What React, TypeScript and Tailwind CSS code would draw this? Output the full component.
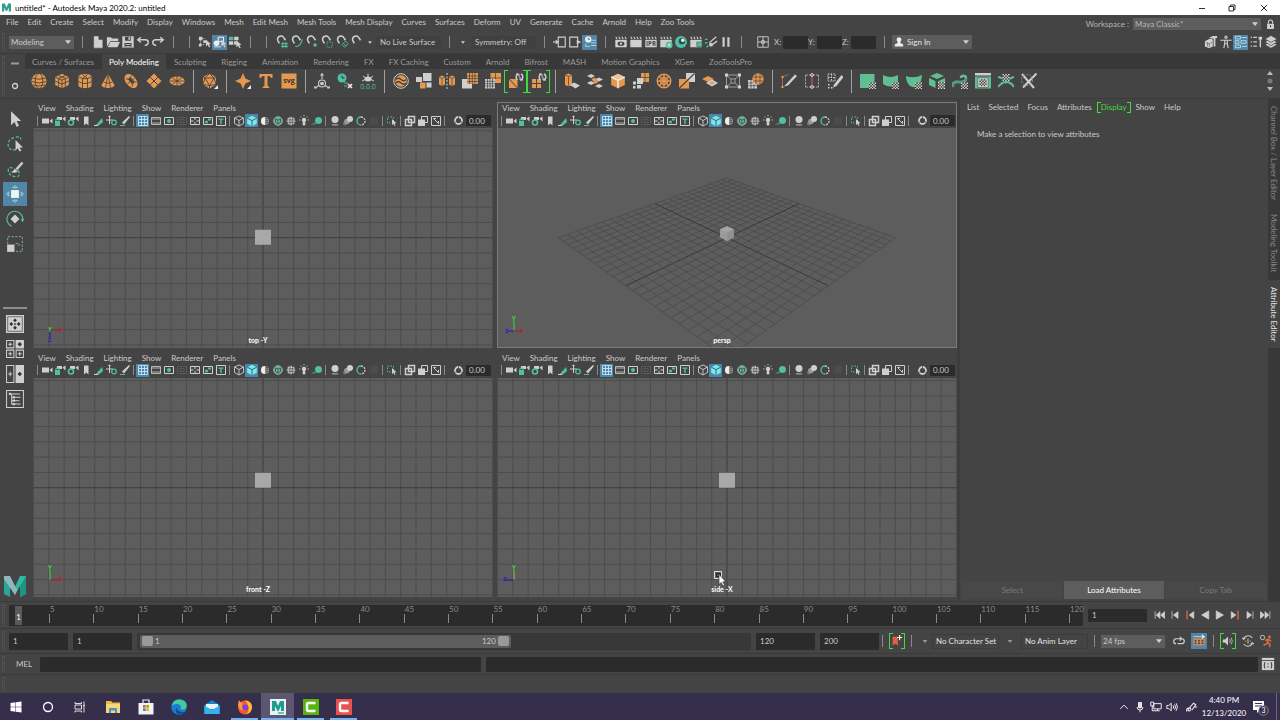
import React, { useState } from "react";
import clsx from "clsx";

const O = "#e59850";
const T = "#4fc0a5";
const G = "#5fbf93";
const W = "#cfcfcf";
const D = "#444444";

const MENUS = [
  "File", "Edit", "Create", "Select", "Modify", "Display", "Windows", "Mesh", "Edit Mesh", "Mesh Tools",
  "Mesh Display", "Curves", "Surfaces", "Deform", "UV", "Generate", "Cache", "Arnold", "Help", "Zoo Tools",
];

const SHELF_TABS = [
  "Curves / Surfaces", "Poly Modeling", "Sculpting", "Rigging", "Animation", "Rendering", "FX", "FX Caching",
  "Custom", "Arnold", "Bifrost", "MASH", "Motion Graphics", "XGen", "ZooToolsPro",
];

const PANEL_MENUS = ["View", "Shading", "Lighting", "Show", "Renderer", "Panels"];

//! checker badge used on the uv tools
const Checker = ({ x, y }: { x: number; y: number }) => (
  <g>
    <rect x={x} y={y} width="7" height="7" fill="#333" />
    {[0, 1, 2, 3, 4, 5, 6, 7, 8, 9, 10, 11, 12].map((i) => {
      const row = Math.floor((i * 2) / 5);
      const col = (i * 2) % 5;
      return <rect key={i} x={x + col * 1.4} y={y + row * 1.4} width="1.4" height="1.4" fill="#e6e6e6" />;
    })}
  </g>
);

const Clapper = ({ children }: { children?: React.ReactNode }) => (
  <g>
    <path d="M2 2l1.500 2.500M5.500 2L7 4.500M9 2l1.500 2.500M12.500 2L14 4.500" stroke={W} strokeWidth="1.300" />
    <rect x="1.500" y="5.500" width="13" height="8.500" fill={W} />
    {children}
  </g>
);

const Magnet = () => (
  <path d="M5 9.500L3.500 7a3.800 3.800 0 0 1 6.500-4l2 3" fill="none" stroke={W} strokeWidth="1.800" />
);

const Arrow = ({ x, y }: { x: number; y: number }) => (
  <path transform={`translate(${x} ${y})`} d="M0 0v8l2-1.800 1.500 3 1.500-.7-1.500-3h2.500z" fill={W} />
);

const iso = "M8 .8l6.800 3.200v8L8 15.200 1.200 12V4z";

//! 16 x 16 drawings for the shelf, status line and tool box
const icons: Record<string, React.ReactNode> = {
  sphere: (
    <g stroke={D} strokeWidth=".9" fill="none">
      <circle cx="8" cy="8" r="7.600" fill={O} stroke="none" />
      <ellipse cx="8" cy="8" rx="3.800" ry="7.600" /><path d="M1 5q7 2.500 14 0M.5 8.500q7.500 3 15 0M2 12q6 2 12 0" />
    </g>
  ),
  cube: (
    <g stroke={D} strokeWidth=".9" fill="none">
      <path d={iso} fill={O} stroke="none" />
      <path d="M1.200 4L8 7.200 14.800 4M8 7.200v8M4.500 2.500l6.800 3v8M11.500 2.500l-6.800 3v8M1.200 8L8 11.200 14.800 8" />
    </g>
  ),
  cylinder: (
    <g stroke={D} strokeWidth=".9" fill="none">
      <path d="M1.500 3.500C1.500 0 14.500 0 14.500 3.500v9c0 3.500-13 3.500-13 0z" fill={O} stroke="none" />
      <path d="M1.500 3.800q6.500 4 13 0M1.500 8.500q6.500 4 13 0M5.500 5.500v9.500M10.500 5.500v9.500M5.500 1.500l5 4M10.500 1.500l-5 4" />
    </g>
  ),
  cone: (
    <g stroke={D} strokeWidth=".8" fill="none">
      <path d="M8 .8L14.500 12c0 4-13 4-13 0z" fill={O} stroke="none" />
      <path d="M8 1L5.500 15M8 1l2.500 14M3.500 9q4.500 2.500 9 0" />
    </g>
  ),
  torus: (
    <g transform="rotate(50 8 8)" stroke={D} strokeWidth=".8">
      <ellipse cx="8" cy="8" rx="8" ry="5.200" fill={O} stroke="none" />
      <ellipse cx="8" cy="7.500" rx="3.400" ry="1.500" fill={D} />
      <path d="M4 4.500l1.500 2M12 4.500l-1.500 2M8 3v3M8 9v4M3 10.500l2.500-2M13 10.500l-2.500-2" />
    </g>
  ),
  plane: (
    <g stroke={D} strokeWidth="1">
      <path d="M8 .5L15.500 8 8 15.500.5 8z" fill={O} stroke="none" /><path d="M4.200 4.200l7.600 7.600M11.800 4.200l-7.600 7.600" />
    </g>
  ),
  disc: (
    <g stroke={D} strokeWidth=".8">
      <ellipse cx="8" cy="8" rx="7.600" ry="4.600" fill={O} stroke="none" /><path d="M3 4.500l10 7M13 4.500l-10 7M8 3v10M.5 8h15" />
    </g>
  ),
  platonic: (
    <g stroke={D} strokeWidth=".9" fill="none">
      <path d="M7.500.5l6.500 3.500v7.500L7.500 15.500 1 11.500V4z" fill={O} stroke="none" />
      <path d="M7.500 12.500L3 5h9zM1 4l2 1M14 4l-2 1M7.500 12.500v3M7.500.5L3 5 1 11.500l6.500 1 6.500-1L12 5z" />
      <path d="M16 12v4h-4z" fill="#eee" stroke="none" />
    </g>
  ),
  star: (
    <g>
      <path d="M8 0l2.400 5.600L16 8l-5.600 2.400L8 16l-2.400-5.600L0 8l5.600-2.400z" fill={O} />
      <path d="M16 12v4h-4z" fill="#eee" />
    </g>
  ),
  type: <path d="M1.500 1h13v4h-1.300q-.5-2-3-2H9.500v9.500q0 1 1.800 1.200V15H4.700v-1.300q1.800-.2 1.800-1.200V3h-.7q-2.500 0-3 2H1.500z" fill={O} />,
  svg: (
    <g>
      <rect x=".5" y=".5" width="15" height="15" fill={O} />
      <text x="8" y="9.500" textAnchor="middle" fontSize="7" fontWeight="bold" fill="#333" fontFamily="Open Sans">svg</text>
    </g>
  ),
  pivot: (
    <g stroke={W} strokeWidth="1.100" fill="none">
      <circle cx="8" cy="10.500" r="3.500" /><circle cx="8" cy="10.500" r="1.300" fill={W} /><path d="M8 1v5M5 12.500L1 15M11 12.500l4 2.500M6.500 2.500L8 .7l1.500 1.800M.8 13v2h2M15.200 13v2h-2" />
    </g>
  ),
  history: (
    <g fill="none">
      <circle cx="5" cy="5" r="4.500" fill={T} /><path d="M5 2.500V5h2.500" stroke="#333" strokeWidth="1" />
      <path d="M7 10h4M7 13h3" stroke={T} strokeWidth="1.200" /><path d="M11 11l4 4M15 11l-4 4" stroke="#eee" strokeWidth="1.600" />
    </g>
  ),
  zero: (
    <g>
      <path d="M8 .5v4M5.500 5h5M3 3l2.500 2M13 3l-2.500 2M2 8l3-1.500M14 8l-3-1.500" stroke={W} strokeWidth="1" /><ellipse cx="8" cy="6" rx="3.500" ry="2.500" fill={W} />
      <text x="8" y="15.500" textAnchor="middle" fontSize="7" fill={T} fontFamily="Open Sans">0,0,0</text>
    </g>
  ),
  combine: (
    <g fill="none">
      <circle cx="8" cy="8" r="7.300" stroke={W} strokeWidth="1" /><circle cx="8" cy="8" r="5.800" fill={O} />
      <path d="M2.500 6.500Q5.500 4 8 6.500t5.500 0M2.500 10q3-2.500 5.500 0t5.500 0" stroke={D} strokeWidth="1.200" />
    </g>
  ),
  separate: (
    <g>
      <rect x="7" y="0" width="8.500" height="8" fill={W} /><rect x="0" y="4" width="6" height="5" fill={W} />
      <rect x="4" y="9.500" width="5.500" height="6" fill={O} /><rect x="10.500" y="9.500" width="5" height="5" fill={W} />
    </g>
  ),
  mirror: (
    <g>
      <path d="M0 4l3-1.500L6 4v7.500L3 13 0 11.500zM10 4l3-1.500L16 4v7.500L13 13l-3-1.500z" fill={O} />
      <path d="M8 0v16" stroke={W} strokeDasharray="2 1.500" /><path d="M0 4l3 1.500L6 4M3 5.500V13M10 4l3 1.500L16 4M13 5.500V13" stroke={D} fill="none" strokeWidth=".7" />
    </g>
  ),
  smooth: (
    <g>
      <rect x="0" y="6" width="10" height="9.500" fill={W} /><rect x="5" y="0" width="11" height="11" fill={O} />
      <path d="M7.500 0v11M10.300 0v11M13 0v11M5 3h11M5 5.500h11M5 8.500h11" stroke={D} strokeWidth=".7" />
    </g>
  ),
  reduce: (
    <g>
      <rect x="5.500" y="0" width="10.500" height="10" fill={O} /><rect x="0" y="6" width="10" height="9.500" fill={W} />
      <path d="M2.500 6v9.500M5 6v9.500M7.500 6v9.500M0 8.300h10M0 10.700h10M0 13h10M10.500 0v6M5.500 5h10.500" stroke={D} strokeWidth=".7" />
    </g>
  ),
  retopo: (
    <g fill="none">
      <rect x="1" y="6" width="8.500" height="9" fill={O} /><path d="M1 6l8.500 9" stroke={D} />
      <path d="M9.500 6.500a3.200 3.200 0 0 1 .5-5.500M13 1a3.200 3.200 0 0 1-.5 6" stroke={W} strokeWidth="1.500" /><path d="M8 1h3v3M15 7h-3V4" stroke={W} />
    </g>
  ),
  remesh: (
    <g fill="none">
      <rect x="1" y="6" width="9" height="9" fill={O} /><path d="M5.500 6v9M1 10.500h9" stroke={D} />
      <path d="M9.500 6.500a3.200 3.200 0 0 1 .5-5.500M13 1a3.200 3.200 0 0 1-.5 6" stroke={W} strokeWidth="1.500" /><path d="M8 1h3v3M15 7h-3V4" stroke={W} />
    </g>
  ),
  extrude: (
    <g>
      <path d="M1 2L4.500 .5 8 2v10l-3.500 1.500L1 12z" fill={O} /><path d="M6 12l4-2.500 6 3-4.500 3z" fill={W} />
      <path d="M1 2l3.500 1.500L8 2M4.500 3.500v10" stroke={D} fill="none" strokeWidth=".7" />
    </g>
  ),
  bridge: (
    <g fill={W}>
      <path d="M0 3l4-2 4 2-4 2zM0 10l4-2 4 2-4 2zM8 6.500l4-2 4 2-4 2zM8 13l4-2 4 2-4 2z" /><path d="M4.500 6l3.500-1.500L11.500 9 8 11z" fill={O} />
    </g>
  ),
  bevel: (
    <g>
      <path d={iso} fill={O} /><path d="M8 .8l6.800 3.200L8 7.500 1.200 4z" fill="#f0c49a" />
      <path d="M1.200 4L8 7.500 14.800 4M8 7.500v7.700" stroke="#eee" fill="none" strokeWidth="1.400" />
    </g>
  ),
  merge: (
    <g>
      <rect x="8" y="0" width="8" height="9" fill={O} /><rect x="4" y="5" width="6" height="6" fill={W} />
      <path d="M0 8.500h3v3H0zM4 12h4v3.500H4zM0 13h2.500v2.500H0z" fill={W} /><path d="M8 4.500h8M12 0v9" stroke={D} strokeWidth=".7" />
    </g>
  ),
  collapse: (
    <g fill="none" stroke={O} strokeWidth="1.400">
      <circle cx="8" cy="8" r="6.800" /><circle cx="8" cy="8" r="3.600" /><path d="M8 1v14M1 8h14M3 3l10 10M13 3L3 13" />
    </g>
  ),
  fill: (
    <g>
      <rect x="7" y="0" width="9" height="9" fill={W} /><rect x="0" y="6" width="10" height="9.500" fill={O} />
      <path d="M0 15.500L15.500 .5" stroke={D} strokeWidth="1.200" />
    </g>
  ),
  quad: (
    <g>
      <path d="M0 6l6-3 6 3-6 3z" fill={O} /><path d="M4 10l6-3.500L16 10l-6 3.500z" fill={W} /><path d="M7 10l3-1.500L13 10l-3 1.500z" fill={O} />
    </g>
  ),
  lattice: (
    <g stroke={W} fill="none" strokeWidth="1">
      <path d="M1.500 2h13v12h-13zM1.500 2L6 6M14.500 2L10 6M1.500 14L6 10M14.500 14L10 10M6 6h4v4H6z" stroke="#9b9b9b" />
      <path d="M0 .5h3v3H0zM13 .5h3v3h-3zM0 12.500h3v3H0zM13 12.500h3v3h-3z" fill={W} stroke="none" />
    </g>
  ),
  spherify: (
    <g>
      <rect x="0" y="7" width="9" height="8.500" fill={W} /><circle cx="10" cy="6" r="5.700" fill={O} />
      <path d="M3 7v8.500M6 11v4.500M0 10h5M0 12.700h9M5 4h10M5 8h10M8 1v10M12 1v10" stroke={D} strokeWidth=".7" />
    </g>
  ),
  multicut: (
    <g fill="none">
      <path d="M1.500 14V4l6-2.500" stroke="#9d6a5a" /><path d="M3 13.500L14 1.500l2 1.500L7 12.500z" fill={W} />
      <circle cx="1.500" cy="4" r="1.200" fill={O} /><circle cx="1.500" cy="14" r="1.200" fill={O} />
    </g>
  ),
  target: (
    <g fill="none" strokeWidth="1">
      <path d="M1.500 2v12M14.500 2v12M1.500 2h13M1.500 14h13" stroke="#a5a5a5" strokeDasharray="2.500 1" /><path d="M8 2v12" stroke="#d2635a" />
      <circle cx="8" cy="2" r="1.400" stroke={W} /><circle cx="8" cy="14" r="1.400" stroke={W} />
    </g>
  ),
  quaddraw: (
    <g>
      <path d="M1 1h7v7H1zM4.500 1v7M1 4.500h7" stroke={W} strokeDasharray="1.500 1" fill="none" /><path d="M7 11.500L14.500 2l2 2L9.500 13l-3.500 1.500z" fill={W} /><path d="M1 11h1.500v1.500H1zM1 14h1.500v1.500H1zM4 14h1.500v1.500H4z" fill={W} />
    </g>
  ),
  uvPlanar: <g><rect x="0" y="1" width="14.500" height="14" fill={G} /><Checker x={9} y={9.500} /></g>,
  uvCyl: <g><path d="M0 2q7.500 4 15 0v9q-7.500 5-15 0z" fill={G} /><Checker x={9} y={9.500} /></g>,
  uvSph: <g><path d="M0 3q8 3 16-1 0 7-5 12-3 1-7-1Q0 9 0 3z" fill={G} /><Checker x={9} y={9.500} /></g>,
  uvAuto: <g><path d="M8 0l7 3-7 3-7-3zM0 5l6.500 3v7L0 12zM9.500 8L16 5v4l-6.500 3z" fill={G} /><Checker x={9} y={9} /></g>,
  uvContour: <g fill="none"><path d="M1 14q-1-6 6-5 7 1 7-4c0-3-5-3-5 0" stroke={G} strokeWidth="2.600" /><path d="M1 14q-1-6 6-5 7 1 7-4" stroke={D} strokeWidth=".6" /><Checker x={9} y={9.500} /></g>,
  uvEditor: <g><rect x="0" y="0" width="16" height="2.500" fill={W} /><rect x="0" y="3.500" width="16" height="12" fill={G} /><rect x="3" y="5" width="10" height="9.500" fill="#e9e9e9" stroke={D} strokeWidth=".6" /><Checker x={4.500} y={6.200} /></g>,
  uvUnfold: <g><path d="M0 4q6 1 8 5 3-4 8-5M0 14q4-5 8-5 5 0 8 5" stroke={G} strokeWidth="2" fill="none" /><Checker x={4.500} y={1} /></g>,
  uvCut: <g fill="none"><path d="M1 1l12 14M15.500.5L2 14.500" stroke={W} strokeWidth="2" /><circle cx="6" cy="7" r="5.500" stroke="#8f8f8f" strokeDasharray="2 1.500" /></g>,
  new: <path d="M3 1h6l4.500 4v10H3zM9 1v4h4.500" fill={W} stroke={D} strokeWidth=".6" />,
  open: <path d="M1 13.500V2.500h4.500L7 4h7v3H5zM5 8h11l-3 6H2z" fill={W} />,
  save: <g><path d="M1.500 1.500h13v13h-13z" fill={W} /><path d="M4.500 2h7v4.500h-7zM4 9h8v5H4z" fill={D} /><path d="M8.500 2.500h2v3h-2zM5 10.500h6v1H5zM5 12.500h6v1H5z" fill={W} /></g>,
  undo: <path d="M5.500 2.500L2 5.500l3.500 3M2.500 5.500h8q3.500 0 3.500 3t-4 3.500" fill="none" stroke={W} strokeWidth="1.600" />,
  redo: <path d="M10.500 2.500L14 5.500l-3.500 3M13.500 5.500h-8Q2 5.500 2 8.500T6 12" fill="none" stroke={W} strokeWidth="1.600" />,
  selHier: <g><path d="M1 2h4v4H1zM1 10h3v3H1zM6 6h3v3H6z" fill={W} /><path d="M3 6v5h4M5 4h3" stroke={W} fill="none" strokeDasharray="1.500 1" /><Arrow x={9} y={5} /></g>,
  selObj: <g><circle cx="4" cy="9.500" r="3.200" fill="#eee" /><path d="M6 2.500h6v5H6z" fill="none" stroke="#eee" strokeWidth="1.200" /><path d="M1 13.500h8" stroke="#eee" /><Arrow x={9.500} y={5} /></g>,
  selComp: <g><path d="M1 2h5v4H1z" fill={T} /><path d="M7 2h5v4H7zM1 7h5v4H1zM7 7h3v4H7z" fill={W} /><Arrow x={9.500} y={6} /></g>,
  snapGrid: <g><Magnet /><path d="M9 8v7M12.500 8v7M7 10h8M7 13h8" stroke={T} strokeWidth="1.200" /></g>,
  snapCurve: <g><Magnet /><path d="M6 13q6 1 8-8" stroke={T} strokeWidth="1.200" fill="none" /></g>,
  snapPoint: <g><Magnet /><circle cx="11.500" cy="11.500" r="2" fill={T} /></g>,
  snapProj: <g><Magnet /><path d="M8 8h6v6H8z" stroke={T} strokeDasharray="1.500 1.500" fill="none" /></g>,
  snapPlane: <g><Magnet /><path d="M8 11l4-4 3 3-4 4zM9.500 9.500l3 3" stroke={T} fill="none" /></g>,
  snapLive: <Magnet />,
  inConn: <g fill="none" stroke={W} strokeWidth="1.300"><path d="M6 2.500h8v11H6z" /><path d="M0 8h3" /><path d="M3 5.500L7 8l-4 2.500z" fill={W} stroke="none" /></g>,
  outConn: <g fill="none" stroke={W} strokeWidth="1.300"><path d="M2 2.500h9v11H2z" /><path d="M10 5.500L15 8l-5 2.500z" fill={W} stroke="none" /></g>,
  construct: <g><circle cx="6" cy="5" r="3.600" fill="#eee" /><path d="M6 3v2h2" stroke="#3d6e8f" fill="none" /><path d="M9 6h6M9 9h6M9 12h6M3 10v3h5" stroke="#b9dcee" fill="none" /></g>,
  render: <Clapper><ellipse cx="8" cy="10" rx="4" ry="2.500" fill="#444" /><circle cx="8" cy="10" r="1.300" fill={W} /></Clapper>,
  renderSeq: <Clapper />,
  ipr: <Clapper><text x="8" y="12.500" textAnchor="middle" fontSize="7" fontWeight="bold" fill="#444" fontFamily="Open Sans">IPR</text></Clapper>,
  renderSet: <Clapper><circle cx="11.500" cy="11.500" r="3" fill="none" stroke={T} strokeWidth="2" /></Clapper>,
  hyper: <g><circle cx="8" cy="8" r="6.800" fill={T} /><circle cx="9" cy="7" r="3.600" fill="#2d4f4a" /><circle cx="10" cy="6" r="2" fill="#e7f7f3" /></g>,
  renderView: <Clapper><rect x="9" y="8" width="6" height="5" fill={T} stroke={D} strokeWidth=".6" /></Clapper>,
  lightEd: <g><path d="M6 9l8-7M8 12l7-5" stroke={W} strokeWidth="1.500" /><circle cx="8" cy="11" r="2.200" fill={W} /><path d="M1 5h3M1 9h3M3 14l2-2" stroke={T} strokeWidth="1.300" /></g>,
  pause: <path d="M4 2.500h2.500v11H4zM9.500 2.500H12v11H9.500z" fill={W} />,
  gridBox: <g fill="none" stroke={W}><path d="M2 2h12v12H2zM8 2v12M2 8h12" /><circle cx="8" cy="8" r="2" /></g>,
  mkit: <g fill={W}><path d="M1 7l6-3 3 1v8l-4 2-5-2z" /><path d="M6 3l4-2h5v2l-2 1v9h-2V4H9z" /><path d="M2 8.500l4 1.500v4M4 9v4M6 10l3-1.500" stroke={D} fill="none" strokeWidth=".6" /></g>,
  human: <g stroke={W} fill="none" strokeWidth="1.300"><circle cx="8" cy="2.500" r="1.300" /><path d="M1.500 6h13M6.500 6v4l-1 5M9.500 6v4l1 5M6.500 10h3" /></g>,
  attr: <g stroke="#bfe3f5" fill="none"><path d="M1.500 1.500h6v3h-6zM1.500 6.500h4v3h-4zM1.500 11.500h6v3h-6zM9 3h6M9 13h6M8 6.500h6v3H8z" /></g>,
  tools: <g><path d="M2 2h1.500v1.500H2zM5 2h4v1.500H5zM2 7h1.500v1.500H2zM5 7h4v1.500H5zM2 12h1.500v1.500H2zM5 12h4v1.500H5z" fill={W} /><path d="M11 2h4v3h-1.200v9h-1.600V5H11z" fill={W} /></g>,
  layers: <g fill={W} stroke={D} strokeWidth=".8"><path d="M8 7l7 4-7 4-7-4z" /><path d="M8 4l7 4-7 4-7-4z" /><path d="M8 .5l7 4-7 4-7-4z" /></g>,
  lock: <g><path d="M5 7V4.500a3 3 0 0 1 6 0V7" stroke={W} strokeWidth="1.600" fill="none" /><rect x="3" y="7" width="10" height="7.500" fill={W} /><path d="M8 9v3" stroke={D} strokeWidth="1.500" /></g>,
  user: <path d="M8 1.500a3.200 3.200 0 0 1 2 5.700V9.500l3.500 1.500V14h-11v-3L6 9.500V7.200a3.200 3.200 0 0 1 2-5.700z" fill="#eee" />,
  select: <path d="M4.500 1v12.500l3-2.800 2 4.300 2-1-2-4.200h4z" fill={W} />,
  lasso: <g><path d="M9 13Q3 14 2 10q-1-6 6-8 6-1 5 2" fill="none" stroke={T} strokeWidth="1.100" strokeDasharray="2.500 1.500" /><path d="M8.500 4.500v9l2-1.800 1.600 3 1.500-.8-1.500-2.900h3z" fill={W} /></g>,
  paint: <g><path d="M11 9q2 6-2 6-7-1-7-6 0-3 4-2" fill="none" stroke={T} strokeWidth="1.100" strokeDasharray="2.500 1.500" /><path d="M8.500 7.500l5.500-6 1.500 1.300L10 9z" fill={W} /><path d="M7.500 7.500l3 2.500Q8 12.500 3.500 10.500 7 10.500 7.500 7.500z" fill={W} /></g>,
  move: <g><rect x="4.500" y="4.500" width="7" height="7" fill="#eef4f8" /><path d="M8 .5l2 2H6zM8 15.500l2-2H6zM.5 8l2-2v4zM15.500 8l-2-2v4z" fill="none" stroke="#9fdfd5" strokeWidth=".8" /></g>,
  rotate: <g><path d="M8 4L12 8l-4 4-4-4z" fill={W} /><path d="M5 14.500A7 7 0 1 1 14.800 9" fill="none" stroke={T} /><path d="M13.200 8h3l-1.500 3z" fill={T} /></g>,
  scale: <g><rect x="1" y="8.500" width="6.500" height="6.500" fill={W} /><path d="M1.500 8V1.500h13v13H9M8.500 7.500h3v3" fill="none" stroke="#8fb3ab" strokeWidth=".8" strokeDasharray="2 1.300" /></g>,
  layout1: <g><rect x="0" y="0" width="16" height="16" fill={W} /><path d="M1.500 1.500h13v13h-13z" fill="none" stroke="#555" strokeWidth=".7" /><path d="M8 3l1.700 1.700L8 6.400 6.300 4.700zM8 9.600l1.700 1.700L8 13l-1.700-1.700zM4.700 6.300L6.400 8 4.700 9.700 3 8zM11.300 6.300L13 8l-1.700 1.700L9.600 8zM8 7l1 1-1 1-1-1z" fill="#333" /></g>,
  layout4: <g fill="none" stroke={W} strokeWidth=".9"><path d="M.5.500h6.500v6.500H.5zM.5 9h6.500v6.500H.5zM9 9h6.500v6.500H9zM3.700 2v3.500M2 3.700h3.500M3.700 10.500V14M2 12.200h3.500M12.200 10.500V14M10.500 12.200H14" /><rect x="8.500" y="0" width="7.500" height="7.500" fill={W} stroke="none" /><path d="M12.200 1.700l2 2-2 2-2-2z" fill="#333" stroke="none" /></g>,
  layout2: <g fill="none" stroke={W} strokeWidth=".9"><path d="M.5.500h6.500v15H.5zM3.700 6v4M2 8h3.500" /><rect x="8.500" y="0" width="7.500" height="16" fill={W} stroke="none" /><path d="M12.200 6l2 2-2 2-2-2z" fill="#333" stroke="none" /></g>,
  outliner: <g fill="none" stroke={W} strokeWidth=".9"><path d="M.5.500h15v15H.5zM3.500 3.500h9M5 3.500v9h2M5 6.500h2M5 9.500h2M8 6.500h5M8 9.500h4M8 12.500h5" /><path d="M2.500 2.500h2v2h-2zM6 5.500h2v2H6zM6 8.500h2v2H6zM6 11.500h2v2H6z" fill={W} stroke="none" /></g>,
  key: <g><path d="M3 3h6v10l-3-2-3 2z" fill="#e0603f" /><path d="M11 1v6M8 4h6" stroke="#eee" strokeWidth="1.400" /></g>,
  loop: <path d="M4 11.500q-3 0-3-3t3-3.500h7M9 2.500L11.500 5 9 7.500M12 5q3 .3 3 3.200t-3 3.300H6" fill="none" stroke={W} strokeWidth="1.600" />,
  cached: <g><path d="M1.500 5h13v8h-13z" fill="#c98a5e" /><path d="M3 7h2v1.500H3zM7 7h2v1.500H7zM11 7h2v1.500h-2zM3 10h2v1.500H3zM7 10h2v1.500H7zM11 10h2v1.500h-2z" fill="#333" /><path d="M1.500 3h9M11.500 1l3 2-3 2z" stroke="#eee" fill="#eee" strokeWidth=".8" /></g>,
  speaker: <g><path d="M1 6h3l4-4v12l-4-4H1z" fill={W} /><path d="M10 5.500q2 2.500 0 5M12 3.500q3.500 4.500 0 9" stroke={W} fill="none" /></g>,
  evaluate: <g fill="none" stroke={W} strokeWidth="1.200"><path d="M3 5a6 6 0 0 1 10-.5M13 11a6 6 0 0 1-10 .5M1.500 4.500L3 6l2-1.500M14.500 11.500L13 10l-2 1.500" /><path d="M8 5v6" stroke={O} strokeWidth="1.500" /><path d="M5 8h1M10 8h1" /></g>,
  prefs: <g><circle cx="4" cy="4" r="2.500" fill="none" stroke={W} /><circle cx="12" cy="3.500" r="1.700" fill="#e0703f" /><path d="M11 6L7 7M11 6l-2 5-4 2M9.500 10l3 1.500-.5 3.500M11 6l3 2.500" stroke="#e0703f" strokeWidth="1.600" fill="none" /></g>,
  script: <g><rect x="1" y="1" width="14" height="14" fill={W} /><path d="M1 4h14" stroke={D} /><path d="M4.500 6q-1.500 3.500 0 7M11.500 6q1.500 3.500 0 7M8 7v1.500M8 10.500V12" stroke={D} strokeWidth="1.300" fill="none" /></g>,
};

//! 12 x 12 drawings for the panel toolbars
const small: Record<string, React.ReactNode> = {
  camera: <path d="M1 3.500h7v5H1zM8.500 6L11.500 3.500v5z" fill={W} />,
  camLock: <g><path d="M3 2h5v3H3zM8.500 3.500L11.500 1.500v5z" fill={W} /><path d="M1 6h5v5H1z" fill={T} /><path d="M2 6V4h3v2" stroke={T} fill="none" /></g>,
  camAttr: <g><path d="M3 2h5v3H3zM8.500 3.500L11.500 1.500v5z" fill={W} /><circle cx="4" cy="7.500" r="2.500" fill="none" stroke={T} strokeWidth="1.600" /></g>,
  bookmark: <path d="M4 1.500h4.500v9L6.200 8.500 4 10.500z" fill={W} />,
  imagePlane: <g><path d="M3 10L9 3l1 4-4 3.500z" fill={T} /><path d="M1 10.500h4" stroke={W} /></g>,
  panZoom: <g fill="none"><path d="M3.500 1v8M0 5h7M2.500 2l1-1.200 1 1.200" stroke={W} /><circle cx="8" cy="7.500" r="2.300" stroke={T} strokeWidth="1.300" /></g>,
  pencil: <g><path d="M3 7.500L10 1l1 1L5 9.500z" fill={W} /><path d="M1 10.500h5" stroke={T} /></g>,
  grid: <path d="M1.500 1.500h9v9h-9zM1.500 4.500h9M1.500 7.500h9M4.500 1.500v9M7.500 1.500v9" stroke="#d9ecf7" strokeWidth=".8" fill="none" />,
  film: <path d="M1.500 2.500h9v7h-9zM1.500 4h9M1.500 8h9" stroke={W} strokeWidth=".8" fill="none" />,
  resGate: <g><path d="M1.500 2.500h9v7h-9z" stroke={W} fill="none" /><circle cx="6" cy="6" r="2" fill={T} /></g>,
  gateMask: <path d="M1.500 2.500h9v7h-9zM4 4.500h4v3H4z" stroke="#575757" fill="none" />,
  fieldChart: <path d="M1.500 2.500h9v7h-9zM6 2.500v2.500M6 7v2.500M1.500 6h3M7.500 6h3" stroke={W} fill="none" />,
  safeAction: <g><path d="M1.500 2.500h9v7h-9z" stroke={W} fill="none" /><circle cx="4.500" cy="7" r="1.600" fill={T} /><path d="M6 3.500h3v2H6z" fill={T} /></g>,
  safeTitle: <g><path d="M1.500 1.500h9v9h-9z" stroke={W} fill="none" /><path d="M3.500 3.500h5v1.300H6.700V9H5.300V4.800H3.500z" fill={T} /></g>,
  wire: <path d="M6 1l4.500 2v5.500L6 11 1.500 8.500V3zM1.500 3L6 5.500 10.500 3M6 5.500V11" stroke={W} strokeWidth=".9" fill="none" />,
  shaded: <g><path d="M6 .8l4.800 2.400v5.600L6 11.200 1.200 8.800V3.200z" fill="#7fe6e6" /><path d="M1.200 3.200L6 5.600l4.800-2.400M6 5.600v5.600" stroke="#2a6f86" fill="none" /></g>,
  defMat: <g><circle cx="6" cy="6" r="4" fill="#888" /><path d="M6 2v8a4 4 0 0 1 0-8z" fill="#eee" /><path d="M8 3v6" stroke="#333" strokeDasharray="1 1" /></g>,
  textured: <g><circle cx="6" cy="6" r="4.300" fill={T} /><path d="M3 3.500L6 5l3-1.500M6 5v4.500M3.500 4v3.500L6 9.300 8.500 7.500V4" stroke="#555" fill="none" /><circle cx="6" cy="6" r="4.300" fill="none" stroke="#9fa8a5" /></g>,
  texture: <g><circle cx="6" cy="6" r="4.300" fill="#bbb" /><path d="M2 5h8M2 7.500h8M5 2v8M7.500 2v8" stroke="#444" strokeDasharray="1.200 1" /></g>,
  lights: <g><circle cx="6" cy="5" r="2.200" fill={W} /><path d="M5 7.500h2V10H5zM6 0v1.500M1 5h1.500M9.500 5H11M2.500 1.500l1 1M9.500 1.500l-1 1" stroke={W} fill={W} strokeWidth=".8" /></g>,
  shadows: <g><circle cx="7.500" cy="5.500" r="3.500" fill={T} /><path d="M0 9l4-1.500L5 9.500H1z" fill={T} opacity=".6" /></g>,
  isolate: <g><circle cx="6" cy="4.500" r="3.500" fill={W} /><ellipse cx="6" cy="9.700" rx="3.500" ry="1" fill="#888" /></g>,
  motion: <g><circle cx="3" cy="8.500" r="2" fill="#777" /><circle cx="5" cy="6.500" r="2.800" fill="#999" /><circle cx="8" cy="4" r="3" fill={W} /></g>,
  aa: <g fill="none" strokeWidth="1.300"><path d="M6 2a4 4 0 0 0 0 8" stroke={T} /><path d="M6 2a4 4 0 0 1 0 8" stroke={W} strokeDasharray="2 1" /></g>,
  blank: <rect x="2" y="2" width="8" height="8" fill="#4b4b4b" />,
  pick: <g><path d="M1.500 2h6v6h-6z" stroke={T} strokeDasharray="1.500 1.500" fill="none" /><path d="M6 4v6l1.500-1.300 1 2.300 1-.5-1-2.300h2z" fill={W} /></g>,
  xray: <g fill="none" stroke={W} strokeWidth="1.500"><path d="M4.500 1.500h6v6h-6zM1.500 4.500h6v6h-6z" /></g>,
  xray2: <g><path d="M4.500 1.500h6v6h-6z" fill="none" stroke={W} /><path d="M1 4.500h7V11H1z" fill={W} /></g>,
  xray3: <path d="M1.500 1.500h9v9h-9zM3.500 3.500l5 5M3.500 3.500h2.500M8.500 8.500V6" fill="none" stroke={W} />,
  exposure: <g fill="none" stroke={W} strokeWidth="2"><circle cx="6" cy="6" r="3.800" /><path d="M6 1v2.500M10.500 8.500l-2-1.200M1.500 8.500l2-1.200" stroke={D} strokeWidth=".8" /></g>,
};

const PANEL_GROUPS = [
  ["camera", "camLock", "camAttr", "bookmark", "imagePlane", "panZoom", "pencil"],
  ["grid", "film", "resGate", "gateMask", "fieldChart", "safeAction", "safeTitle"],
  ["wire", "shaded", "defMat", "textured", "texture", "lights", "shadows"],
  ["isolate", "motion", "aa", "blank"],
  ["pick"],
  ["xray", "xray2", "xray3"],
];

const SHELF_GROUPS = [
  ["sphere", "cube", "cylinder", "cone", "torus", "plane", "disc"],
  ["platonic"],
  ["star", "type", "svg"],
  ["pivot", "history", "zero"],
  ["combine", "separate", "mirror", "smooth", "reduce", "retopo", "remesh"],
  ["extrude", "bridge", "bevel", "merge", "collapse", "fill", "quad", "lattice", "spherify"],
  ["multicut", "target", "quaddraw"],
  ["uvPlanar", "uvCyl", "uvSph", "uvAuto", "uvContour", "uvEditor", "uvUnfold", "uvCut"],
];

const Icon = ({ name, className = "w-3 h-3" }: { name: string; className?: string }) => (
  <svg viewBox="0 0 16 16" className={clsx("shrink-0", className)}>{icons[name]}</svg>
);

const Brackets = () => (
  <>
    <span className="absolute inset-y-0 left-0 w-1 border-y border-l border-[#3fdc3f]" />
    <span className="absolute inset-y-0 right-0 w-1 border-y border-r border-[#3fdc3f]" />
  </>
);

//! every small thing on the status line sits in a 15px slot
const Slot = ({ name, active }: { name: string; active?: boolean }) => (
  <button aria-label={name} className={clsx("flex h-[15px] w-[15px] shrink-0 items-center justify-center", active && "bg-[#5285a6]")}>
    <Icon name={name} className="h-3.5 w-3.5" />
  </button>
);

const Sep = () => (
  <span className="flex w-4 shrink-0 justify-center">
    <span className="h-3 w-px bg-[#8a8a8a]" />
  </span>
);

const Caret = ({ className }: { className?: string }) => (
  <svg viewBox="0 0 8 5" className={clsx("shrink-0", className)}><path d="M0 0h8L4 5z" fill={W} /></svg>
);

const Grip = () => <span className="my-0.5 ml-0.5 w-[3px] shrink-0 self-stretch border-x border-dotted border-[#5a5a5a]" />;

const Drop = ({ label, value, className, icon }: { label: string; value: string; className: string; icon?: string }) => (
  <div className={clsx("relative flex shrink-0 items-center bg-[#5d5d5d]", className)}>
    {icon && <Icon name={icon} className="ml-px h-3 w-3" />}
    <select aria-label={label} className="h-full w-full appearance-none bg-transparent pl-0.5 outline-none">
      <option>{value}</option>
    </select>
    <Caret className="pointer-events-none absolute right-[3px] h-1 w-1.5" />
  </div>
);

const Field = ({ label, value = "", className }: { label: string; value?: string; className: string }) => (
  <input aria-label={label} defaultValue={value} className={clsx("min-w-0 rounded-[1px] bg-[#2b2b2b] outline-none", className)} />
);

const TitleBar = () => (
  <header className="flex h-[15px] shrink-0 items-center bg-white pl-0.5 text-black">
    <svg viewBox="0 0 16 16" className="h-[9px] w-[9px]">
      <path d="M0 1h5l3 7 3-7h5v14h-4V8l-3 6H7L4 8v7H0z" fill="#2d9f8c" />
    </svg>
    <h1 className="ml-1">untitled* - Autodesk Maya 2020.2: untitled</h1>
    <div className="ml-auto flex">
      <button aria-label="Minimize" className="flex w-[31px] items-center justify-center"><svg viewBox="0 0 8 8" className="h-2 w-2"><path d="M1 4.500h6" stroke="#333" /></svg></button>
      <button aria-label="Restore" className="flex w-[30px] items-center justify-center"><svg viewBox="0 0 8 8" className="h-2 w-2"><path d="M1 2.500h4.500V7H1zM2.500 2.500V1H7v4.500H5.500" stroke="#333" fill="none" /></svg></button>
      <button aria-label="Close" className="flex w-[33px] items-center justify-center"><svg viewBox="0 0 8 8" className="h-2 w-2"><path d="M1 1l6 6M7 1L1 7" stroke="#333" /></svg></button>
    </div>
  </header>
);

const MenuBar = () => (
  <nav className="flex h-4 shrink-0 items-start pl-1.5">
    <div className="flex h-[14px] items-center gap-[9px]">
      {MENUS.map((m) => (
        <button key={m} className="whitespace-nowrap">{m}</button>
      ))}
    </div>
    <div className="ml-auto flex items-center pt-[3px] text-[#b5b5b5]">
      <span className="mr-1">Workspace :</span>
      <Drop label="Workspace" value="Maya Classic*" className="h-3 w-[128px]" />
      <Icon name="lock" className="mx-1 h-[11px] w-[11px]" />
    </div>
  </nav>
);

const StatusLine = () => (
  <section className="flex h-[23px] shrink-0 items-center border-b border-[#3a3a3a]">
    <Grip />
    <Drop label="Menu set" value="Modeling" className="ml-1 h-[13px] w-[65px]" />
    <Sep />
    {["new", "open", "save", "undo", "redo"].map((n) => <Slot key={n} name={n} />)}
    <Sep />
    <Sep />
    <Slot name="selHier" />
    <Slot name="selObj" active />
    <Slot name="selComp" />
    <Sep />
    <Sep />
    {["snapGrid", "snapCurve", "snapPoint", "snapProj", "snapPlane", "snapLive"].map((n) => <Slot key={n} name={n} />)}
    <Caret className="mx-1 h-[3px] w-1" />
    <button className="h-[13px] w-[65px] shrink-0 bg-[#404040] pl-1 text-left">No Live Surface</button>
    <Sep />
    <Caret className="mx-1 h-[3px] w-1" />
    <button className="ml-0.5 h-[13px] w-[65px] shrink-0 bg-[#404040] pl-1 text-left">Symmetry: Off</button>
    <Sep />
    <Slot name="inConn" />
    <Slot name="outConn" />
    <Slot name="construct" active />
    <Sep />
    {["render", "renderSeq", "ipr", "renderSet", "hyper", "renderView", "lightEd", "pause"].map((n) => <Slot key={n} name={n} />)}
    <Sep />
    <span className="w-1.5" />
    <Slot name="gridBox" />
    <div className="ml-1 flex items-center">
      {["X:", "Y:", "Z:"].map((a) => (
        <label key={a} className="flex items-center">
          <span className="w-[9px]">{a}</span>
          <input className="h-[13px] w-[25px] rounded-[1px] bg-[#2b2b2b] outline-none" />
        </label>
      ))}
    </div>
    <Sep />
    <Drop label="Account" value="Sign In" icon="user" className="h-[14px] w-[80px] text-[#e4e4e4]" />
    <div className="ml-auto flex items-center pr-0.5">
      <Slot name="mkit" />
      <Slot name="human" />
      <Slot name="attr" active />
      <Slot name="tools" />
      <Slot name="layers" />
    </div>
  </section>
);

const Shelf = () => {
  const [tab, setTab] = useState("Poly Modeling");
  return (
    <section className="flex h-11 shrink-0">
      <Grip />
      <div className="flex w-5 shrink-0 flex-col items-center justify-between py-2">
        <svg viewBox="0 0 8 4" className="h-1 w-2"><path d="M0 .5h8v2H0z" fill="#999" /></svg>
        <svg viewBox="0 0 8 8" className="h-2 w-2"><circle cx="4" cy="4" r="2.500" stroke={W} strokeWidth="1.300" fill="none" /></svg>
      </div>
      <div className="min-w-0 flex-1">
        <div className="flex h-[15px] gap-px bg-[#383838]">
          {SHELF_TABS.map((t) => (
            <button
              key={t}
              onClick={() => setTab(t)}
              className={clsx("whitespace-nowrap px-[7px]", t === tab ? "bg-[#444] text-white" : "text-[#9a9a9a]")}
            >
              {t}
            </button>
          ))}
        </div>
        <div className="flex h-6 items-center pl-0.5">
          {SHELF_GROUPS.map((group, i) => (
            <React.Fragment key={i}>
              {i > 0 && (
                <span className="flex w-2.5 shrink-0 justify-center">
                  <span className="h-[23px] w-px bg-[#a0a0a0]" />
                </span>
              )}
              {group.map((n) => (
                <button key={n} aria-label={n} className="relative flex h-[23px] w-[23px] shrink-0 items-center justify-center">
                  <Icon name={n} className="h-4 w-4" />
                  {(n === "retopo" || n === "remesh") && <Brackets />}
                </button>
              ))}
            </React.Fragment>
          ))}
          <svg viewBox="0 0 8 20" className="ml-auto mr-1.5 h-5 w-2">
            <path d="M1 4h6L4 0zM1 16h6l-3 4z" fill="#bbb" /><circle cx="4" cy="10" r="2.500" fill="#777" />
          </svg>
        </div>
      </div>
    </section>
  );
};

const TOOLS = ["select", "lasso", "paint", "move", "rotate", "scale"];
const LAYOUTS = ["layout1", "layout4", "layout2", "outliner"];

const ToolBox = () => (
  <aside className="flex w-[33px] shrink-0 flex-col pl-[3px] pt-2">
    <div className="flex flex-col gap-px">
      {TOOLS.map((t) => (
        <button key={t} aria-label={t} className={clsx("flex h-6 w-6 items-center justify-center", t === "move" && "bg-[#5285a6]")}>
          <Icon name={t} className="h-[18px] w-[18px]" />
        </button>
      ))}
    </div>
    <div className="mb-[3px] mt-[51px] h-0.5 w-6 bg-[#8c8c8c]" />
    <div className="flex flex-col gap-px">
      {LAYOUTS.map((t) => (
        <button key={t} aria-label={t} className="flex h-6 w-6 items-center justify-center">
          <Icon name={t} className="h-[18px] w-[18px]" />
        </button>
      ))}
    </div>
    <svg viewBox="0 0 22 21" className="mb-1 ml-px mt-auto h-[21px] w-[22px]">
      <path d="M0 0h6v21l-6-3z" fill="#2aa597" />
      <path d="M22 0h-6l-5 11v8l5-9v11l6-3z" fill="#34b8a4" />
      <path d="M0 0h6l7 14-2 5L0 3z" fill="#8fb8bd" />
      <path d="M16 10v11l6-3V0z" fill="#1f9484" />
    </svg>
  </aside>
);

type View = "top" | "persp" | "front" | "side";

const GRID = 15.3;
const range = (n: number) => Array.from({ length: n * 2 + 1 }, (_, i) => i - n);

//! ground plane projected with a fixed camera, u and v run from -1 to 1
const project = (u: number, v: number) => {
  const w = 1 - 0.168 * (u + v);
  return `${(230 + (84.3 * (u - v)) / w).toFixed(1)} ${(110 + (39.9 * (u + v)) / w).toFixed(1)}`;
};

const Scene = ({ view }: { view: View }) => {
  if (view === "persp") {
    return (
      <svg viewBox="0 0 460 220" preserveAspectRatio="xMidYMid slice" className="absolute inset-0 h-full w-full">
        {range(12).map((i) => (
          <path
            key={i}
            d={`M${project(i / 12, -1)}L${project(i / 12, 1)}M${project(-1, i / 12)}L${project(1, i / 12)}`}
            stroke={i === 0 ? "#383838" : "#4a4a4a"}
            strokeWidth={i === 0 ? 1 : 0.8}
          />
        ))}
        <path d="M230 98.500l7 3v8l-7 4-7-4v-8z" fill="#9a9a9a" />
        <path d="M223 101.500l7 3.500 7-3.500-7-3z" fill="#a4a4a4" />
        <path d="M230 105v8.500l7-4v-8z" fill="#909090" />
      </svg>
    );
  }
  return (
    <svg viewBox="0 0 460 220" preserveAspectRatio="xMidYMid slice" className="absolute inset-0 h-full w-full">
      {range(15).map((i) => (
        <path key={`v${i}`} d={`M${230 + i * GRID} 0V220`} stroke={i === 0 ? "#3c3c3c" : "#4d4d4d"} />
      ))}
      {range(7).map((i) => (
        <path key={`h${i}`} d={`M0 ${110 + i * GRID}H460`} stroke={i === 0 ? "#3c3c3c" : "#4d4d4d"} />
      ))}
      <rect x="222" y={view === "top" ? 102 : 95} width="16" height="15" fill="#a8a8a8" />
    </svg>
  );
};

const AXES: Record<View, { lines: [string, string][]; labels: [string, number, number, string][] }> = {
  top: { lines: [["M10 15H20", "#b01c2c"], ["M10 15V23", "#1c1cc0"]], labels: [["x", 19, 17, "#c01c2c"], ["y", 8, 16, "#3fdc3f"], ["z", 8, 27, "#1c1cd0"]] },
  persp: { lines: [["M10 16V6", "#3fdc3f"], ["M10 16H4", "#1c1cc0"], ["M10 16h8", "#b01c2c"]], labels: [["y", 8, 5, "#3fdc3f"], ["z", 1, 18, "#1c1cd0"], ["x", 16, 18, "#c01c2c"]] },
  front: { lines: [["M10 16V6", "#3fdc3f"], ["M10 16H20", "#b01c2c"]], labels: [["y", 8, 5, "#3fdc3f"], ["x", 19, 17, "#c01c2c"]] },
  side: { lines: [["M10 16V6", "#8fcc3f"], ["M10 16H2", "#1c1cc0"]], labels: [["y", 8, 5, "#3fdc3f"], ["z", -1, 17, "#1c1cd0"]] },
};

const ViewPanel = ({ view, label, active }: { view: View; label: string; active?: boolean }) => (
  <section className={clsx("relative flex min-h-0 flex-col pt-px", active && "after:pointer-events-none after:absolute after:inset-0 after:border after:border-[#7b7b7b]")}>
    <div className="flex h-2.5 shrink-0 items-center gap-2.5 pl-[5px]">
      {PANEL_MENUS.map((m) => (
        <button key={m}>{m}</button>
      ))}
    </div>
    <div className="flex h-[15px] shrink-0 items-center pl-0.5">
      {PANEL_GROUPS.map((group, i) => (
        <React.Fragment key={i}>
          <span className="flex w-[5px] shrink-0 justify-center"><span className="h-2.5 w-px bg-[#8a8a8a]" /></span>
          {group.map((n) => (
            <button
              key={n}
              aria-label={n}
              className={clsx("flex h-[13px] w-[13px] shrink-0 items-center justify-center", (n === "grid" || n === "shaded") && "bg-[#4b86ad]")}
            >
              <svg viewBox="0 0 12 12" className="h-3 w-3">{small[n]}</svg>
            </button>
          ))}
        </React.Fragment>
      ))}
      <span className="flex w-[5px] shrink-0 justify-center"><span className="h-2.5 w-px bg-[#8a8a8a]" /></span>
      <label className="ml-auto flex items-center pr-0.5">
        <svg viewBox="0 0 12 12" className="mr-0.5 h-[11px] w-[11px]">{small.exposure}</svg>
        <Field label="Exposure" value="0.00" className="h-[11px] w-[25px] px-[3px]" />
      </label>
    </div>
    <div className="relative min-h-0 flex-1 overflow-hidden bg-[#5d5d5d]">
      <Scene view={view} />
      <svg viewBox="0 0 26 26" className="absolute bottom-[7px] left-[7px] h-[26px] w-[26px] overflow-visible">
        {AXES[view].lines.map(([d, c]) => <path key={d} d={d} stroke={c} fill="none" />)}
        {AXES[view].labels.map(([t, x, y, c]) => (
          <text key={t} x={x} y={y} fill={c} fontSize="7" fontWeight="bold">{t}</text>
        ))}
      </svg>
      <p className="absolute inset-x-0 bottom-1 pr-2.5 text-center text-[7px] font-bold leading-2 text-white">{label}</p>
      {view === "side" && (
        <svg viewBox="0 0 14 18" className="absolute bottom-2.5 left-[47%] h-[18px] w-[14px]">
          <path d="M1.500 2.500h7v7h-7z" fill="none" stroke="#ddd" /><path d="M3.500 4.500h4v3h-4z" fill="none" stroke="#222" />
          <path d="M6 5.500v10l2.200-2 1.600 3.500 1.700-.8-1.600-3.400h3z" fill="#fff" stroke="#222" strokeWidth=".6" />
        </svg>
      )}
    </div>
  </section>
);

const AttributeEditor = () => (
  <section className="flex w-[308px] shrink-0 flex-col px-0.5">
    <div className="flex h-4 items-center gap-[9px] pl-[5px]">
      {["List", "Selected", "Focus", "Attributes"].map((m) => <button key={m}>{m}</button>)}
      <button className="relative -mx-1 px-1 py-px leading-[9px] text-[#3fdc3f]">Display<Brackets /></button>
      <button>Show</button>
      <button>Help</button>
    </div>
    <p className="mt-3.5 pl-[15px]">Make a selection to view attributes</p>
    <div className="mb-0.5 mt-auto flex h-[18px] gap-px">
      <button className="flex-1 bg-[#484848] text-[#7a7a7a]" disabled>Select</button>
      <button className="flex-1 bg-[#5d5d5d] text-white">Load Attributes</button>
      <button className="flex-1 bg-[#484848] text-[#7a7a7a]" disabled>Copy Tab</button>
    </div>
  </section>
);

const SideTabs = () => (
  <div className="flex w-3 shrink-0 flex-col bg-[#383838] text-[#888]">
    {["Channel Box / Layer Editor", "Modeling Toolkit", "Attribute Editor"].map((t) => (
      <button key={t} className={clsx("flex w-3 shrink-0 items-center justify-center py-[7px]", t === "Attribute Editor" && "bg-[#444] text-[#e4e4e4]")}>
        <span className="whitespace-nowrap [writing-mode:vertical-rl]">{t}</span>
      </button>
    ))}
  </div>
);

const PLAY: [string, string][] = [
  ["Go to start", "M1.500 3v10M8 3.500v9L3 8zM14 3.500v9L9 8z"],
  ["Step back", "M4 3v10M12 3.500v9L6 8z"],
  ["Previous key", "M13 3.500v9L7 8z"],
  ["Play backwards", "M13 2.500v11L3.500 8z"],
  ["Play forwards", "M3 2.500v11L12.500 8z"],
  ["Next key", "M3 3.500v9L9 8z"],
  ["Step forward", "M12 3v10M4 3.500v9L10 8z"],
  ["Go to end", "M14.500 3v10M2 3.500v9L7 8zM8 3.500v9L13 8z"],
];

const TimeSlider = () => (
  <section className="flex h-[27px] shrink-0 items-center border-t border-[#3a3a3a]">
    <Grip />
    <div className="relative ml-1 flex h-[21px] flex-1 bg-[#2b2b2b] pl-10">
      <span className="absolute inset-y-px left-1.5 flex w-[7px] items-center justify-center bg-[#5a5a5a] pt-1 text-white">1</span>
      {Array.from({ length: 24 }, (_, i) => (i + 1) * 5).map((f) => (
        <div key={f} className={clsx("flex flex-col", f === 120 ? "w-[14px]" : "min-w-0 flex-1")}>
          <span className="h-[9px] pl-px leading-[9px] text-[#8a8a8a]">{f}</span>
          <span className="h-[9px] w-px bg-[#8a8a8a]" />
        </div>
      ))}
    </div>
    <Field label="Current frame" value="1" className="ml-[5px] h-[13px] w-[59px] px-1" />
    <div className="ml-[5px] mr-2 flex">
      {PLAY.map(([label, d], i) => (
        <button key={label} aria-label={label} className="flex h-[15px] w-[15px] items-center justify-center">
          <svg viewBox="0 0 16 16" className="h-3 w-3">
            <path d={d} fill={W} stroke={W} />
            {i === 2 && <path d="M4 2v12" stroke="#e0703f" strokeWidth="1.600" />}
            {i === 5 && <path d="M12 2v12" stroke="#e0703f" strokeWidth="1.600" />}
          </svg>
        </button>
      ))}
    </div>
  </section>
);

const RangeSlider = () => (
  <section className="flex h-[25px] shrink-0 items-center border-t border-[#3a3a3a]">
    <Grip />
    <div className="ml-1 flex min-w-0 flex-1 gap-[5px]">
      <Field label="Animation start" value="1" className="h-[17px] w-[59px] px-1" />
      <Field label="Playback start" value="1" className="h-[17px] w-[59px] px-1" />
      <div className="relative h-[17px] flex-1 bg-[#383838] px-[3px] py-0.5">
        <div className="flex h-[13px] w-[61%] items-center justify-between rounded-[2px] bg-[#5d5d5d] px-0.5">
          <span className="flex items-center gap-0.5"><i className="h-2.5 w-[11px] rounded-[2px] bg-[#999]" />1</span>
          <span className="flex items-center gap-0.5">120<i className="h-2.5 w-[11px] rounded-[2px] bg-[#999]" /></span>
        </div>
        <input type="range" aria-label="Playback range" min={1} max={200} defaultValue={120} className="absolute inset-0 w-full opacity-0" />
      </div>
      <Field label="Playback end" value="120" className="h-[17px] w-[59px] px-1" />
      <Field label="Animation end" value="200" className="h-[17px] w-[59px] px-1" />
    </div>
    <span className="ml-[3px] h-3 w-px bg-[#8a8a8a]" />
    <button aria-label="Bookmark" className="relative mx-1.5 flex h-4 w-4 items-center justify-center"><Icon name="key" className="h-3.5 w-3.5" /><Brackets /></button>
    <span className="h-3 w-px bg-[#8a8a8a]" />
    <Caret className="ml-2.5 mr-1 h-[3px] w-1.5 opacity-60" />
    <button className="h-[15px] w-[67px] border border-[#3c3c3c] pl-[3px] text-left text-[#e0e0e0]">No Character Set</button>
    <Caret className="mx-2 h-[3px] w-1.5 opacity-60" />
    <button className="h-[15px] w-[67px] border border-[#3c3c3c] pl-[3px] text-left text-[#e0e0e0]">No Anim Layer</button>
    <span className="mx-1.5 h-3 w-px bg-[#8a8a8a]" />
    <Drop label="Frame rate" value="24 fps" className="h-[13px] w-[64px]" />
    <button aria-label="Loop" className="ml-1.5 flex h-4 w-4 items-center justify-center"><Icon name="loop" className="h-3 w-3" /></button>
    <button aria-label="Cached playback" className="ml-1 flex h-4 w-4 items-center justify-center bg-[#5285a6]"><Icon name="cached" className="h-3.5 w-3.5" /></button>
    <span className="mx-1.5 h-3 w-px bg-[#8a8a8a]" />
    <button aria-label="Sound" className="relative flex h-4 w-4 items-center justify-center"><Icon name="speaker" className="h-3 w-3" /><Brackets /></button>
    <button aria-label="Evaluation" className="ml-1 flex h-4 w-4 items-center justify-center"><Icon name="evaluate" className="h-3.5 w-3.5" /></button>
    <button aria-label="Preferences" className="ml-0.5 mr-1.5 flex h-4 w-4 items-center justify-center"><Icon name="prefs" className="h-3.5 w-3.5" /></button>
  </section>
);

const CommandLine = () => (
  <section className="flex h-[22px] shrink-0 items-center border-y border-[#3a3a3a]">
    <Grip />
    <label htmlFor="mel" className="w-[35px] pl-[11px]">MEL</label>
    <div className="grid flex-1 grid-cols-[4fr_7fr] gap-[5px]">
      <input id="mel" className="h-[15px] min-w-0 rounded-[1px] bg-[#2b2b2b] px-1 outline-none" />
      <input aria-label="Output" readOnly className="h-[15px] min-w-0 rounded-[1px] bg-[#2b2b2b] px-1 outline-none" />
    </div>
    <button aria-label="Script editor" className="ml-[3px] mr-[5px] flex w-[14px] justify-center"><Icon name="script" className="h-3.5 w-3.5" /></button>
  </section>
);

const APPS: { name: string; open?: boolean; art: React.ReactNode }[] = [
  { name: "Files", art: <g><path d="M1 2h5l1.500 1.500H15V14H1z" fill="#e9b94a" /><path d="M1 5h14v9H1z" fill="#f7d774" /><path d="M4 9h8v5h-2v-2.500H6V14H4z" fill="#4a94c8" /></g> },
  { name: "Store", art: <g><path d="M5 4V1h6v3" stroke="#eee" strokeWidth="1.200" fill="none" /><path d="M.5 4h15v11.500H.5z" fill="#f2f2f2" /><path d="M5 6h2.700v2.700H5z" fill="#e2574c" /><path d="M8.300 6H11v2.700H8.300z" fill="#7fba00" /><path d="M5 9.300h2.700V12H5z" fill="#2f8fd8" /><path d="M8.300 9.300H11V12H8.300z" fill="#f3b500" /></g> },
  { name: "Edge", art: <g><circle cx="8" cy="8" r="7.700" fill="#1b7fd0" /><path d="M.5 7Q2 0 9 .4q7 .8 6.700 6.800-.7 3.800-5.700 3.300-1-.8 0-2Q10 5.500 7 5 3 4.500.5 7z" fill="#43cba0" /><path d="M5.500 8q0 5.500 8.500 5-3 3-7 2.500Q3 13 5.500 8z" fill="#0d4f9e" /></g> },
  { name: "Mail", art: <g><path d="M.3 6L8 1l7.700 5v9H.3z" fill="#1a7fc8" /><path d="M2 5h12v5H2z" fill="#e9f5fc" /><path d="M.3 6.500L8 11l7.700-4.500V15H.3z" fill="#35b1ec" /></g> },
  { name: "Firefox", open: true, art: <g><circle cx="8" cy="8.500" r="7" fill="#f5533d" /><path d="M8 1q8 2 7 8-1 5-6 6.500Q15 10 8 1z" fill="#fbbf2c" /><path d="M1 6q0-3 1.500-5Q3 4 6 4q-2 2 0 3-2 3 2 4-5 2-7-5z" fill="#ff9a2e" /><circle cx="8.300" cy="8.500" r="3" fill="#7a45d6" /></g> },
  { name: "Maya", open: true, art: <g><path d="M0 0h16v16H0z" fill="#e8f3f2" /><path d="M2 2h4l2 5 2-5h4v10h-3V7l-2.500 5h-1L5 7v5H2z" fill="#1f9d8c" /><path d="M8 14h6" stroke="#1f9d8c" strokeWidth="1.200" /></g> },
  { name: "Camtasia", open: true, art: <g><path d="M0 0h16v16H0z" fill="#58b510" /><path d="M12.500 4H5.500Q4 4 4 5.500v5Q4 12 5.500 12h7" stroke="#fff" strokeWidth="2.400" fill="none" /></g> },
  { name: "Recorder", open: true, art: <g><path d="M0 0h16v16H0z" fill="#e8524f" /><path d="M12.500 4H5.500Q4 4 4 5.500v5Q4 12 5.500 12h7" stroke="#fff" strokeWidth="2.400" fill="none" /></g> },
];

const TRAY: [string, string][] = [
  ["Hidden icons", "M3 10.500l5-5 5 5"],
  ["Microphone", "M6 2h4v7H6zM4 8q0 4 4 4t4-4M8 12v3M6.500 2.500h3v6h-3zM7.500 3v6M8.500 3v6"],
  ["Network", "M5 3.500h10v7H5zM1 1.500h4v5H1zM3 6.500V13h5M8 13h5M10 10.500V13"],
  ["Volume", "M1 6h2.500L7 3v10l-3.500-3H1zM9.500 6q1.500 2 0 4M11.500 4.500q2.500 3.500 0 7M13.500 3q3.500 5 0 10"],
];

const TaskBar = () => (
  <footer className="flex h-[27px] shrink-0 items-stretch bg-[#362f4c] text-white">
    <button aria-label="Start" className="flex w-8 items-center justify-center">
      <svg viewBox="0 0 12 12" className="h-3 w-3"><path d="M.5 2L5.500 1.300v4.400h-5zM6 1.200L11.500.5v5.200H6zM.5 6.300h5v4.400l-5-.7zM6 6.300h5.500v5.200L6 10.800z" fill="#fff" /></svg>
    </button>
    <button aria-label="Search" className="flex w-8 items-center justify-center">
      <svg viewBox="0 0 12 12" className="h-3 w-3"><circle cx="6" cy="6" r="4.500" stroke="#fff" strokeWidth="1.300" fill="none" /></svg>
    </button>
    <button aria-label="Task view" className="flex w-8 items-center justify-center">
      <svg viewBox="0 0 12 12" className="h-3 w-3"><path d="M1 1v1.500h6.500V1M1 4h6.500v4H1zM1 11.500V10h6.500v1.500M10 .5v11M9 4.500h2" stroke="#ddd" fill="none" /></svg>
    </button>
    <div className="flex">
      {APPS.map((a) => (
        <button
          key={a.name}
          aria-label={a.name}
          className={clsx("flex w-[33px] flex-col items-center", a.name === "Maya" ? "bg-[#5d5672]" : "px-[3px]")}
        >
          <span className="flex flex-1 items-center">
            <svg viewBox="0 0 16 16" className="h-4 w-4">{a.art}</svg>
          </span>
          {a.open && <span className="-mt-0.5 h-0.5 w-full bg-[#76b0ee]" />}
        </button>
      ))}
    </div>
    <div className="ml-auto flex items-center">
      {TRAY.map(([name, d]) => (
        <button key={name} aria-label={name} className="flex w-4 justify-center">
          <svg viewBox="0 0 16 16" className="h-3 w-3"><path d={d} stroke="#eee" strokeWidth="1.300" fill="none" /></svg>
        </button>
      ))}
      <button aria-label="Pen" className="flex w-6 justify-center">
        <svg viewBox="0 0 16 16" className="h-3 w-3"><path d="M1 14q-1-5 4-5 3 2 0 4-3 1-2-2L10 3l3 2-5 7M10 8h5" stroke="#eee" strokeWidth="1.400" fill="none" /></svg>
      </button>
      <div className="flex h-full w-10 flex-col items-center justify-around py-px">
        <time>4:40 PM</time>
        <span>12/13/2020</span>
      </div>
      <button aria-label="Notifications" className="flex w-8 justify-center">
        <svg viewBox="0 0 18 18" className="h-[18px] w-[18px]">
          <path d="M2 3h11v9H9l-3 3v-3H2z" fill="#fff" /><path d="M4 5.500h7M4 8h7" stroke="#362f4c" />
          <circle cx="12.500" cy="12.500" r="4.800" fill="#362f4c" stroke="#aaa" strokeWidth=".7" />
          <text x="12.500" y="15" textAnchor="middle" fontSize="7" fill="#fff">3</text>
        </svg>
      </button>
      <span className="mr-[3px] h-full w-px bg-[#6d6784]" />
    </div>
  </footer>
);

const App = () => {
  return (
    <div className="flex h-screen min-w-[1120px] flex-col overflow-hidden bg-[#444] font-[Lato,'Open_Sans',sans-serif] text-[8px] leading-[10px] text-[#cacaca]">
      <TitleBar />
      <MenuBar />
      <StatusLine />
      <Shelf />
      <main className="flex min-h-0 flex-1 border-t border-[#3a3a3a]">
        <ToolBox />
        <div className="grid min-w-0 flex-1 grid-cols-2 grid-rows-2 gap-1 bg-[#444] pb-1 pt-[3px]">
          <ViewPanel view="top" label="top -Y" />
          <ViewPanel view="persp" label="persp" active />
          <ViewPanel view="front" label="front -Z" />
          <ViewPanel view="side" label="side -X" />
        </div>
        <span className="w-[3px] shrink-0 bg-[#3d3d3d]" />
        <AttributeEditor />
        <SideTabs />
      </main>
      <TimeSlider />
      <RangeSlider />
      <CommandLine />
      <div className="flex h-[18px] shrink-0"><Grip /></div>
      <TaskBar />
    </div>
  );
};

export default App;
